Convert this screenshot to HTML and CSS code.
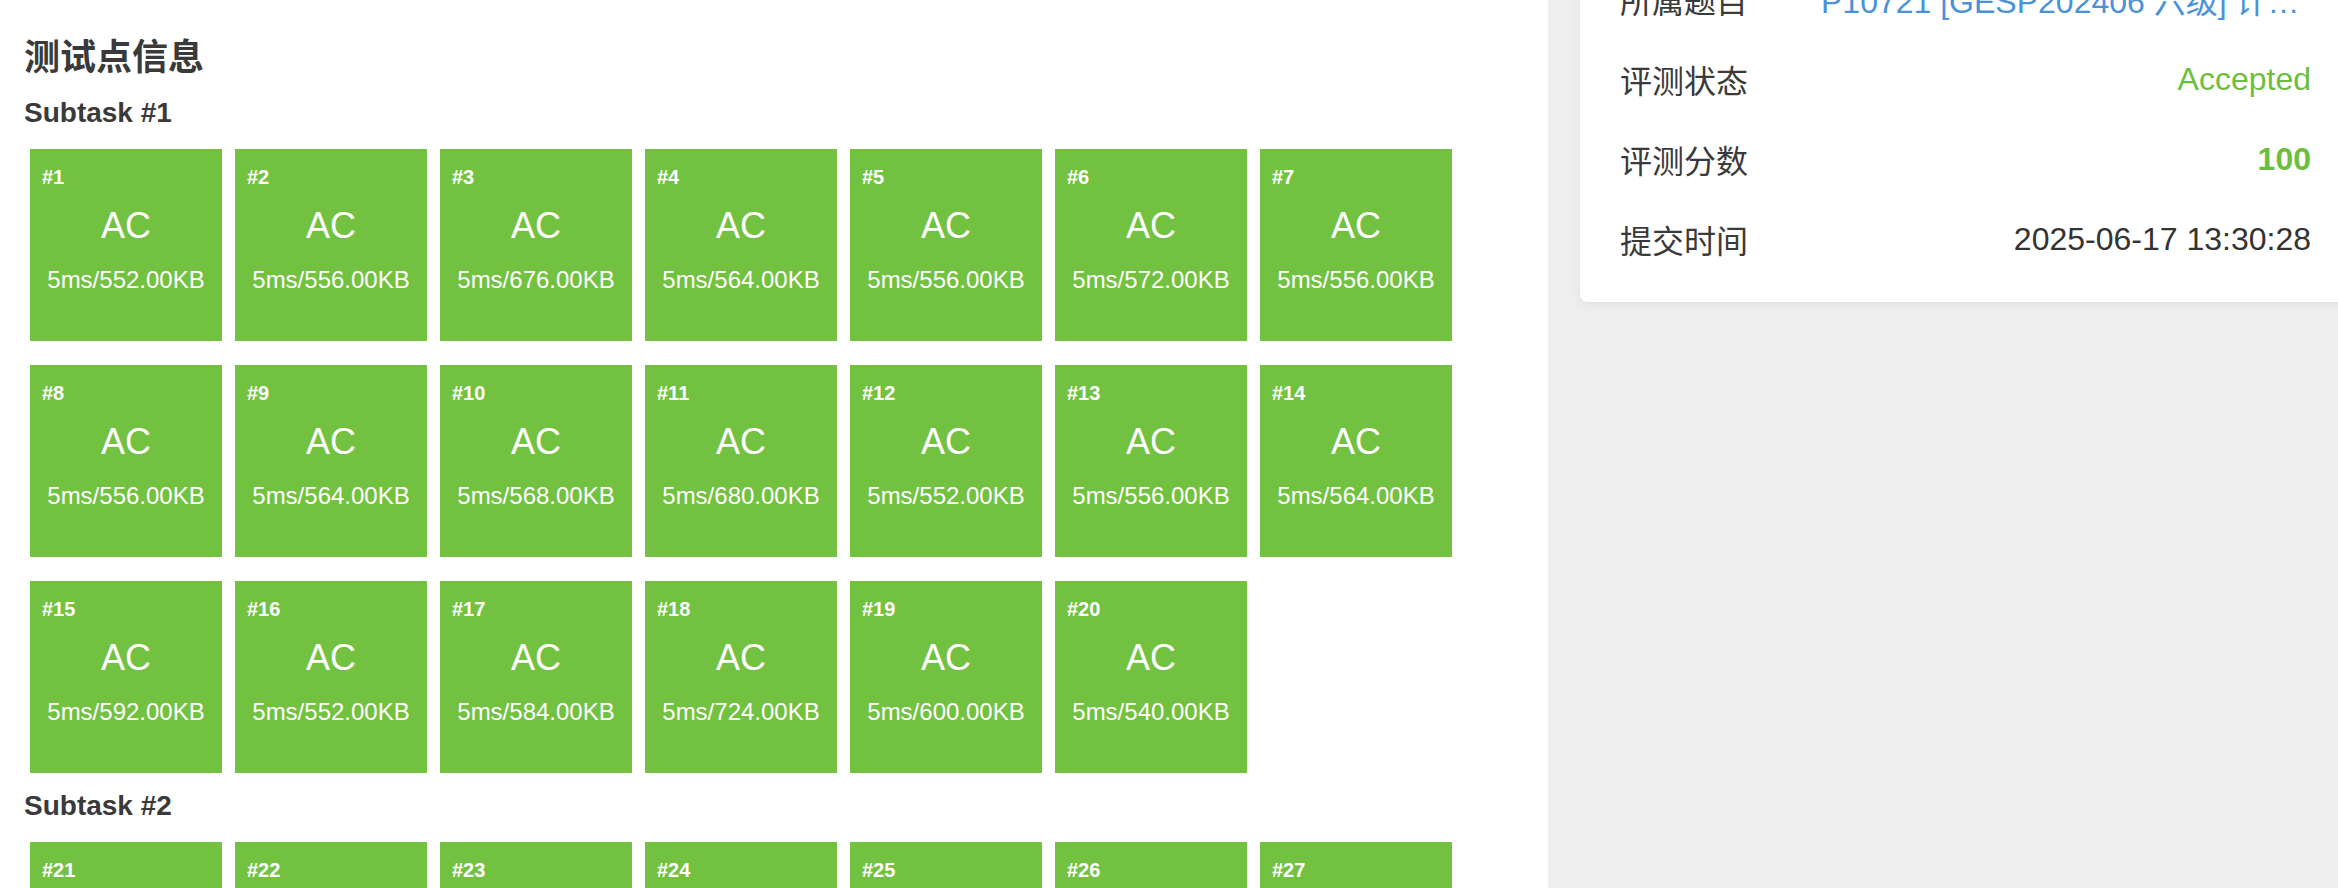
FILE: index.html
```html
<!DOCTYPE html>
<html>
<head>
  <meta charset="UTF-8">
  <title>评测详情</title>
  <link rel="stylesheet" href="styles.css">
</head>
<body>
  <div class="layout">
    <div class="main">
      <h2 class="section-title">测试点信息</h2>

      <h3 class="subtask-title">Subtask #1</h3>
      <div class="case-list">
        <div class="case"><div class="case-id">#1</div><div class="case-status">AC</div><div class="case-stat">5ms/552.00KB</div></div>
        <div class="case"><div class="case-id">#2</div><div class="case-status">AC</div><div class="case-stat">5ms/556.00KB</div></div>
        <div class="case"><div class="case-id">#3</div><div class="case-status">AC</div><div class="case-stat">5ms/676.00KB</div></div>
        <div class="case"><div class="case-id">#4</div><div class="case-status">AC</div><div class="case-stat">5ms/564.00KB</div></div>
        <div class="case"><div class="case-id">#5</div><div class="case-status">AC</div><div class="case-stat">5ms/556.00KB</div></div>
        <div class="case"><div class="case-id">#6</div><div class="case-status">AC</div><div class="case-stat">5ms/572.00KB</div></div>
        <div class="case"><div class="case-id">#7</div><div class="case-status">AC</div><div class="case-stat">5ms/556.00KB</div></div>
        <div class="case"><div class="case-id">#8</div><div class="case-status">AC</div><div class="case-stat">5ms/556.00KB</div></div>
        <div class="case"><div class="case-id">#9</div><div class="case-status">AC</div><div class="case-stat">5ms/564.00KB</div></div>
        <div class="case"><div class="case-id">#10</div><div class="case-status">AC</div><div class="case-stat">5ms/568.00KB</div></div>
        <div class="case"><div class="case-id">#11</div><div class="case-status">AC</div><div class="case-stat">5ms/680.00KB</div></div>
        <div class="case"><div class="case-id">#12</div><div class="case-status">AC</div><div class="case-stat">5ms/552.00KB</div></div>
        <div class="case"><div class="case-id">#13</div><div class="case-status">AC</div><div class="case-stat">5ms/556.00KB</div></div>
        <div class="case"><div class="case-id">#14</div><div class="case-status">AC</div><div class="case-stat">5ms/564.00KB</div></div>
        <div class="case"><div class="case-id">#15</div><div class="case-status">AC</div><div class="case-stat">5ms/592.00KB</div></div>
        <div class="case"><div class="case-id">#16</div><div class="case-status">AC</div><div class="case-stat">5ms/552.00KB</div></div>
        <div class="case"><div class="case-id">#17</div><div class="case-status">AC</div><div class="case-stat">5ms/584.00KB</div></div>
        <div class="case"><div class="case-id">#18</div><div class="case-status">AC</div><div class="case-stat">5ms/724.00KB</div></div>
        <div class="case"><div class="case-id">#19</div><div class="case-status">AC</div><div class="case-stat">5ms/600.00KB</div></div>
        <div class="case"><div class="case-id">#20</div><div class="case-status">AC</div><div class="case-stat">5ms/540.00KB</div></div>
      </div>

      <h3 class="subtask-title">Subtask #2</h3>
      <div class="case-list">
        <div class="case"><div class="case-id">#21</div><div class="case-status">AC</div><div class="case-stat">5ms/556.00KB</div></div>
        <div class="case"><div class="case-id">#22</div><div class="case-status">AC</div><div class="case-stat">5ms/560.00KB</div></div>
        <div class="case"><div class="case-id">#23</div><div class="case-status">AC</div><div class="case-stat">5ms/552.00KB</div></div>
        <div class="case"><div class="case-id">#24</div><div class="case-status">AC</div><div class="case-stat">5ms/564.00KB</div></div>
        <div class="case"><div class="case-id">#25</div><div class="case-status">AC</div><div class="case-stat">5ms/556.00KB</div></div>
        <div class="case"><div class="case-id">#26</div><div class="case-status">AC</div><div class="case-stat">5ms/572.00KB</div></div>
        <div class="case"><div class="case-id">#27</div><div class="case-status">AC</div><div class="case-stat">5ms/560.00KB</div></div>
      </div>
    </div>

    <div class="side">
      <div class="info-card">
        <div class="info-row">
          <span class="info-label">所属题目</span>
          <a class="info-value problem-link" href="#">P10721 [GESP202406 六级] 计算得分</a>
        </div>
        <div class="info-row">
          <span class="info-label">评测状态</span>
          <span class="info-value status-ac">Accepted</span>
        </div>
        <div class="info-row">
          <span class="info-label">评测分数</span>
          <span class="info-value score">100</span>
        </div>
        <div class="info-row">
          <span class="info-label">提交时间</span>
          <span class="info-value">2025-06-17 13:30:28</span>
        </div>
      </div>
    </div>
  </div>
</body>
</html>
```

FILE: styles.css
```css
/* page */
body {
  margin: 0;
  background-color: #eeeeee;
  font-family: "Liberation Sans", "Noto Sans CJK SC", sans-serif;
  color: #333;
  overflow: hidden;
}
.layout {
  display: flex;
  height: 100vh;
}

/* left column: test cases */
.main {
  width: 1548px;
  flex-shrink: 0;
  box-sizing: border-box;
  padding: 36px 24px 0;
  background-color: #fff;
}
.section-title {
  margin: 0;
  font-size: 36px;
  line-height: 44px;
  font-weight: bold;
  color: #3a3a3a;
}
.subtask-title {
  margin: 12px 0 15px;
  font-size: 28px;
  line-height: 42px;
  font-weight: bold;
  color: #3a3a3a;
}
.case-list {
  display: flex;
  flex-wrap: wrap;
  gap: 24px 13px;
  padding: 0 6px;
}
.case {
  width: 192px;
  height: 192px;
  background-color: #73c141;
  color: #fff;
}
.case-id {
  padding: 16px 12px 0;
  font-size: 20px;
  line-height: 24px;
  font-weight: 600;
}
.case-status {
  margin-top: 15px;
  font-size: 36px;
  line-height: 44px;
  text-align: center;
}
.case-stat {
  margin-top: 16px;
  font-size: 24px;
  line-height: 32px;
  text-align: center;
  white-space: nowrap;
}

/* right column: submission info */
.side {
  flex: 1;
  min-width: 0;
  padding-left: 32px;
}
.info-card {
  margin-top: -60px;
  margin-right: -13px;
  padding: 19px 40px 23px;
  background-color: #fff;
  border-radius: 8px;
  box-shadow: 0 2px 10px rgba(0, 0, 0, 0.06);
}
.info-row {
  display: flex;
  align-items: center;
  height: 80px;
  font-size: 32px;
}
.info-label {
  flex: 0 0 201px;
  color: #3a3a3a;
}
.info-value {
  flex: 1;
  min-width: 0;
  text-align: right;
  white-space: nowrap;
  overflow: hidden;
  text-overflow: ellipsis;
  color: #333;
}
.problem-link {
  color: #4a92d8;
  text-decoration: none;
}
.status-ac {
  color: #6cbf3e;
}
.score {
  color: #6cbf3e;
  font-weight: bold;
}
```
